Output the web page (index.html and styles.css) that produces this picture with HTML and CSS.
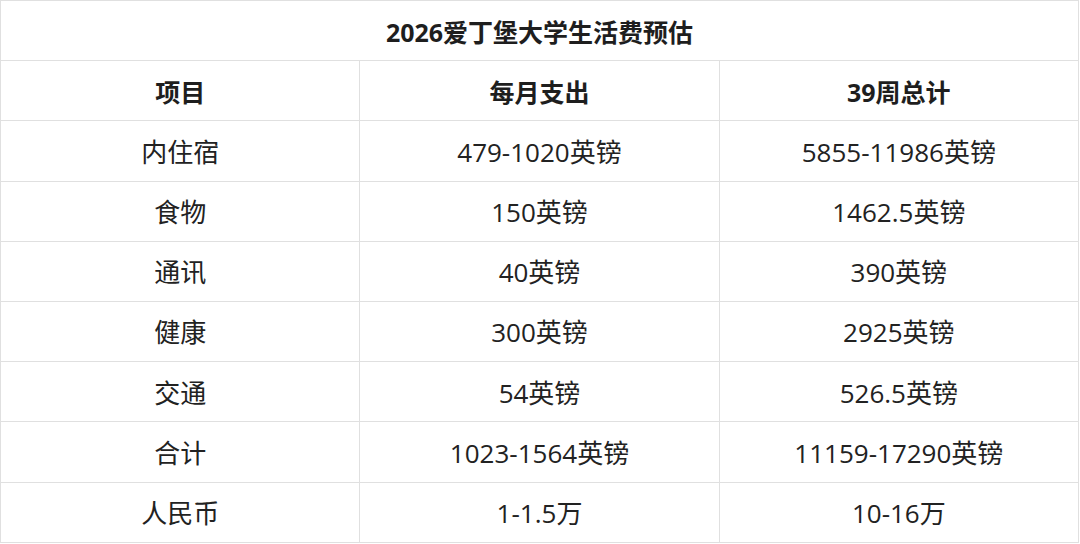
FILE: index.html
```html
<!DOCTYPE html>
<html lang="zh-CN">
<head>
<meta charset="utf-8">
<title>2026爱丁堡大学生活费预估</title>
<link rel="stylesheet" href="styles.css">
</head>
<body>
<table class="sheet">
  <colgroup><col class="c"><col class="c"><col class="c"></colgroup>
  <tr class="title-row"><th colspan="3">2026爱丁堡大学生活费预估</th></tr>
  <tr class="head-row"><th>项目</th><th>每月支出</th><th>39周总计</th></tr>
  <tr><td>内住宿</td><td>479-1020英镑</td><td>5855-11986英镑</td></tr>
  <tr><td>食物</td><td>150英镑</td><td>1462.5英镑</td></tr>
  <tr><td>通讯</td><td>40英镑</td><td>390英镑</td></tr>
  <tr><td>健康</td><td>300英镑</td><td>2925英镑</td></tr>
  <tr><td>交通</td><td>54英镑</td><td>526.5英镑</td></tr>
  <tr><td>合计</td><td>1023-1564英镑</td><td>11159-17290英镑</td></tr>
  <tr><td>人民币</td><td>1-1.5万</td><td>10-16万</td></tr>
</table>
</body>
</html>
```
FILE: styles.css
```css
html, body {
  margin: 0;
  padding: 0;
  background: #ffffff;
}

.sheet {
  width: 1079px;
  border-collapse: collapse;
  table-layout: fixed;
  font-family: "Open Sans", "Noto Sans CJK SC", sans-serif;
  color: #222222;
}

.sheet .c {
  width: 33.333%;
}

.sheet tr {
  height: 60.2px;
}

.sheet th,
.sheet td {
  border: 1px solid #e0e0e0;
  text-align: center;
  vertical-align: middle;
  padding: 3px 0 0 0;
  line-height: 1.2;
  white-space: nowrap;
}

.sheet th {
  font-size: 25px;
  font-weight: 700;
  color: #1e1e1e;
}

.sheet td {
  font-size: 26px;
  font-weight: 400;
}
```
